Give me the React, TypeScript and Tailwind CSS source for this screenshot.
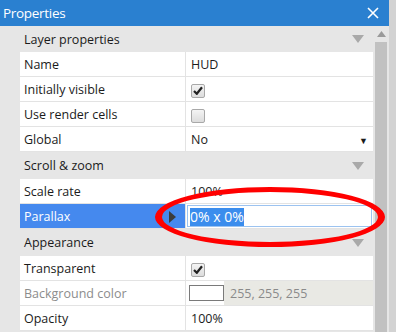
import React from 'react';

type Row =
	| { kind: 'section'; label: string; first?: boolean }
	| { kind: 'row'; label: string; value: React.ReactNode; muted?: boolean; selected?: boolean; valueClass?: string };

const Checkbox = ({ checked }: { checked: boolean }) => (
	<span className="inline-flex w-[14px] h-[14px] items-center justify-center rounded-[2px] border border-[#a8a8a8] bg-gradient-to-b from-[#f4f4f4] to-[#dcdcdc]">
		{checked && (
			<svg width="10" height="9" viewBox="0 0 10 9">
				<path d="M1 5 L3.8 7.8 L9 1.2" fill="none" stroke="#222" strokeWidth="2.2" />
			</svg>
		)}
	</span>
);

const SectionArrow = () => (
	<svg width="12" height="8" viewBox="0 0 12 8" className="mr-[9px]">
		<path d="M0 0 H12 L6 8 Z" fill="#a9a9a9" />
	</svg>
);

const rows: Row[] = [
	{ kind: 'section', label: 'Layer properties', first: true },
	{ kind: 'row', label: 'Name', value: 'HUD' },
	{ kind: 'row', label: 'Initially visible', value: <Checkbox checked /> },
	{ kind: 'row', label: 'Use render cells', value: <Checkbox checked={false} /> },
	{
		kind: 'row',
		label: 'Global',
		value: (
			<div className="flex w-full items-center justify-between pr-[5px]">
				<span>No</span>
				<span className="text-[9px]">▼</span>
			</div>
		),
	},
	{ kind: 'section', label: 'Scroll & zoom' },
	{ kind: 'row', label: 'Scale rate', value: '100%' },
	{ kind: 'row', label: 'Parallax', value: '0% x 0%', selected: true },
	{ kind: 'section', label: 'Appearance' },
	{ kind: 'row', label: 'Transparent', value: <Checkbox checked /> },
	{
		kind: 'row',
		label: 'Background color',
		muted: true,
		valueClass: 'pl-[3px]',
		value: (
			<div className="flex h-full w-full items-center">
				<span className="w-[35px] h-[16px] border border-[#7a7a7a] bg-white shrink-0" />
				<div className="flex h-full flex-1 items-center bg-[#e9e9e4] pl-[6px] pt-[3px] text-[#8a8a8a]">255, 255, 255</div>
			</div>
		),
	},
	{ kind: 'row', label: 'Opacity', value: '100%' },
];

const App = () => {
	return (
		<div
			className="relative flex w-[396px] h-[332px] overflow-hidden bg-[#d3d3d3] text-[12.5px] text-[#1b1b1b]"
			style={{ fontFamily: '"Open Sans", "Noto Sans", sans-serif' }}
		>
			<div className="flex w-[389px] flex-col">
				{/* Title bar */}
				<div className="flex h-[26px] shrink-0 items-center justify-between bg-[#2a80d0] pl-[3px] pr-[10px] text-white">
					<span className="text-[13.5px] tracking-[-0.3px]">Properties</span>
					<svg width="12" height="12" viewBox="0 0 12 12">
						<path d="M1 1 L11 11 M11 1 L1 11" stroke="#fff" strokeWidth="1.6" />
					</svg>
				</div>

				<div className="flex flex-1 bg-[#e6e6e6]">
					{/* Grid */}
					<div className="flex w-[373px] flex-col">
						{rows.map((row, index) =>
							row.kind === 'section' ? (
								<div
									key={`section-${index}`}
									className={
										row.first
											? 'flex h-[26px] shrink-0 items-center justify-between pl-[24px]'
											: 'flex h-[27px] shrink-0 items-center justify-between pl-[24px]'
									}
								>
									<span className="pt-[2px]">{row.label}</span>
									<SectionArrow />
								</div>
							) : (
								<div key={`row-${index}`} className="ml-[20px] flex h-[25px] shrink-0 border-b border-[#e3e3e3] bg-white">
									<div
										className={
											row.selected
												? 'flex w-[165px] items-center justify-between bg-[#4589ee] pl-[4px] pr-[9px] text-white'
												: row.muted
													? 'flex w-[165px] items-center pl-[4px] text-[#8c8c8c]'
													: 'flex w-[165px] items-center pl-[4px]'
										}
									>
										<span className="pt-[3px]">{row.label}</span>
										{row.selected && (
											<svg width="7" height="12" viewBox="0 0 7 12" className="mt-[1px]">
												<path d="M0 0 L7 6 L0 12 Z" fill="#3c3c3c" />
											</svg>
										)}
									</div>
									<div className="w-px bg-[#e3e3e3]" />
									{row.selected ? (
										<div className="flex flex-1 items-stretch py-[1px] pl-[1px] pr-[1px]">
											<div className="flex flex-1 items-center border border-[#9cc3f0] pl-[2px] pt-[2px]">
												<span className="bg-[#3b8ded] text-[14px] text-white leading-[18px]">{row.value}</span>
											</div>
										</div>
									) : (
										<div className={`flex flex-1 items-center ${row.valueClass ?? 'pl-[5px] pt-[3px]'}`}>{row.value}</div>
									)}
								</div>
							)
						)}
					</div>

					{/* Scrollbar */}
					<div className="flex w-[16px] flex-col items-center">
						<svg width="9" height="6" viewBox="0 0 9 6" className="mt-[5px]">
							<path d="M0 6 L4.5 0 L9 6 Z" fill="#9a9a9a" />
						</svg>
						<div className="mt-[5px] w-[12px] flex-1 bg-[#c1c1c1]" />
					</div>
				</div>
			</div>

			{/* Annotation */}
			<svg className="absolute left-0 top-0 pointer-events-none" width="396" height="332">
				<path
					fillRule="evenodd"
					fill="#ff0000"
					d="M155 217 A115 30 0 1 0 385 217 A115 30 0 1 0 155 217 Z M162 217 A108 25 0 1 0 378 217 A108 25 0 1 0 162 217 Z"
				/>
			</svg>
		</div>
	);
};

export default App;
